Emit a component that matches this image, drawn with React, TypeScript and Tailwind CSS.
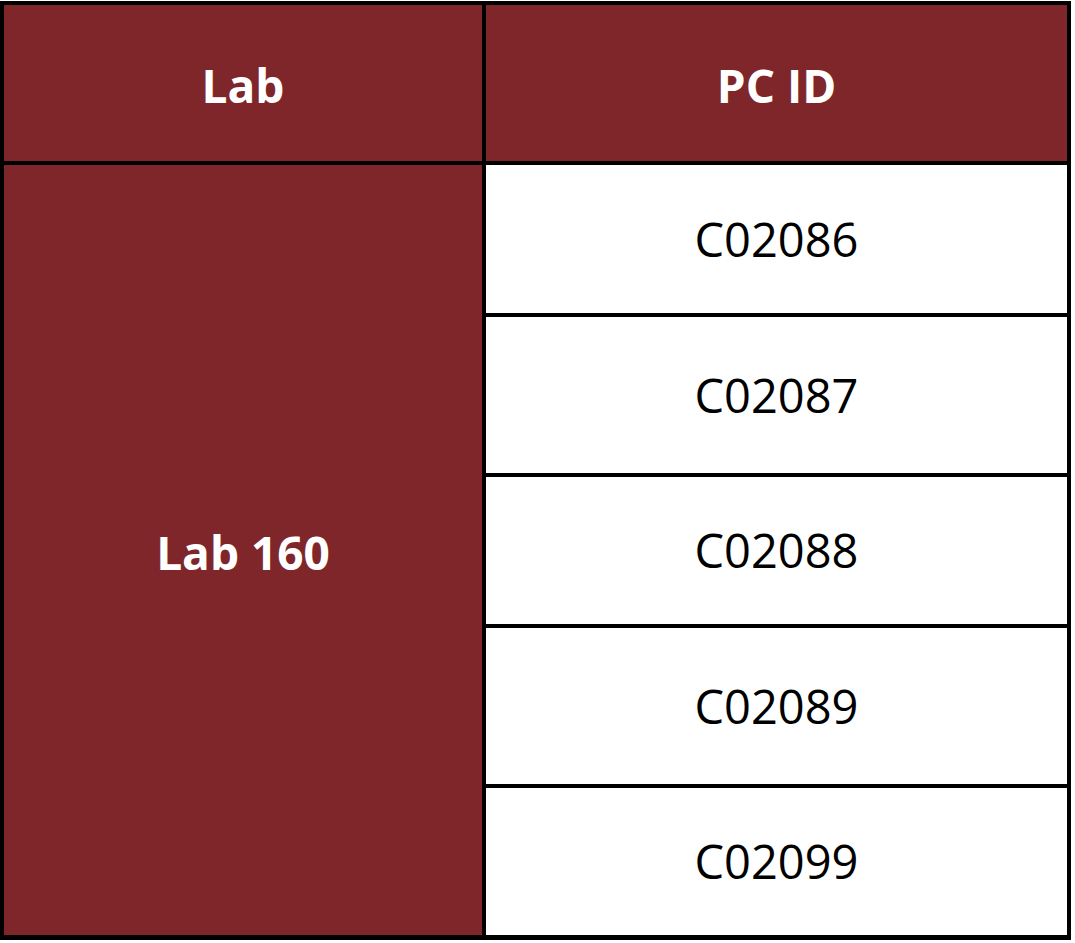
const pcIds = ["C02086", "C02087", "C02088", "C02089", "C02099"];

const rowHeights = ["h-[148px]", "h-[156px]", "h-[147px]", "h-[156px]", "h-[147px]"];

export default function App() {
  return (
    <div className="min-h-screen bg-white font-['Open_Sans',sans-serif]">
      <div className="mt-px grid w-[1071px] grid-cols-[478px_581px] gap-[4px] bg-black px-[4px] pt-[4px] pb-[5px]">
        <div className="flex h-[156px] items-center justify-center bg-[#7f262a] pt-[4px] text-[46px] font-bold text-white">
          Lab
        </div>
        <div className="flex h-[156px] items-center justify-center bg-[#7f262a] pt-[4px] text-[46px] font-bold text-white">
          PC ID
        </div>

        <div className="row-span-5 flex items-center justify-center bg-[#7f262a] pt-[4px] text-[46px] font-bold text-white">
          Lab 160
        </div>
        {pcIds.map((id, i) => (
          <div
            key={id}
            className={`flex ${rowHeights[i]} items-center justify-center bg-white text-[47px] text-black`}
          >
            {id}
          </div>
        ))}
      </div>
    </div>
  );
}
